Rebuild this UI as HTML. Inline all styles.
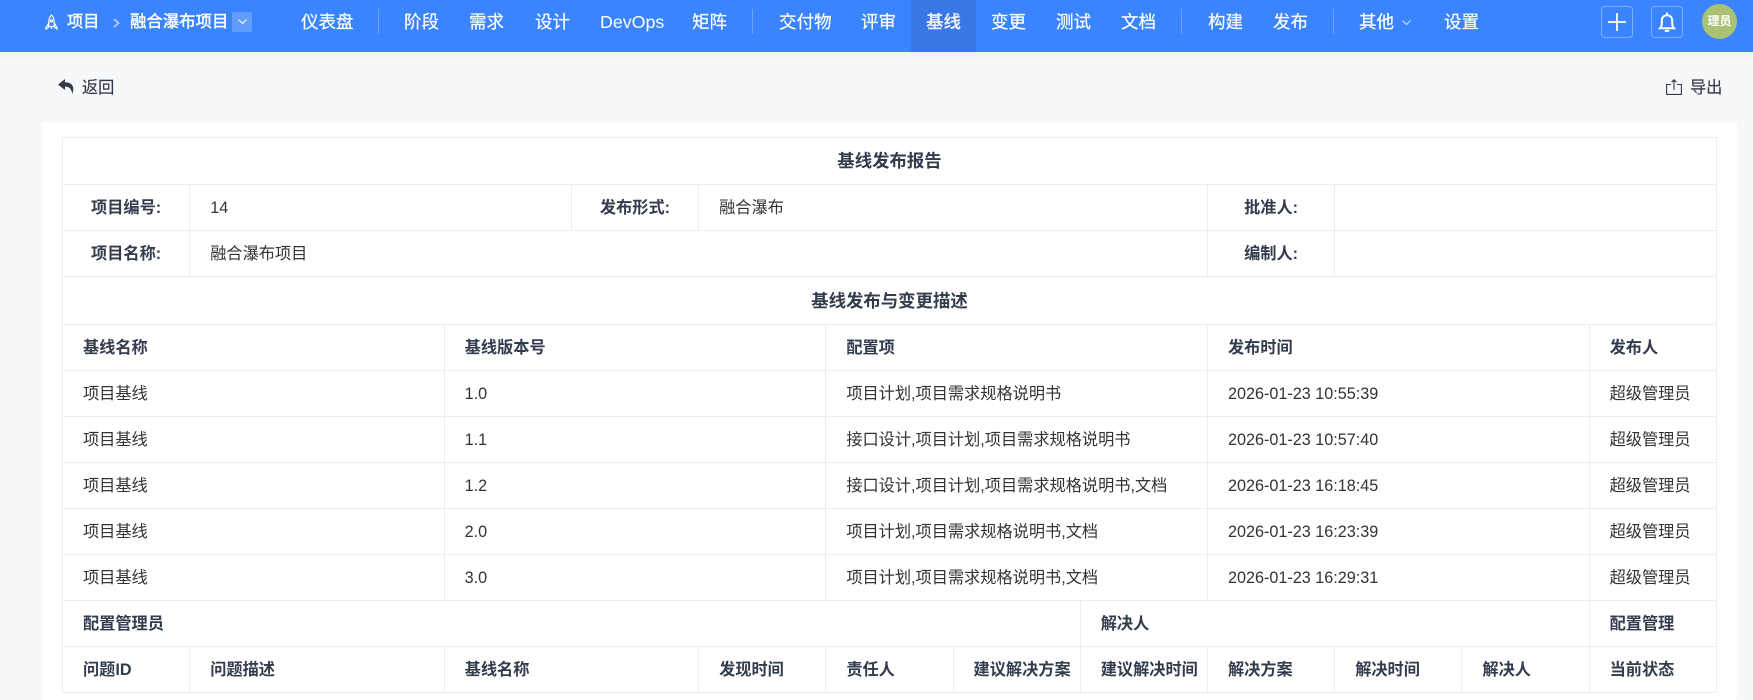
<!DOCTYPE html>
<html lang="zh-CN">
<head>
<meta charset="utf-8">
<title>基线发布报告</title>
<style>
*{box-sizing:border-box}
html,body{margin:0;padding:0;width:1753px;height:700px;overflow:hidden;background:#f7f8fa}
body{font-family:"Liberation Sans","WenQuanYi Zen Hei","Noto Sans CJK SC",sans-serif;font-size:16px;color:#333;position:relative}
#nav{position:absolute;left:0;top:0;width:1753px;height:52px;background:#3a84ff;box-shadow:0 2px 8px rgba(0,0,0,.05);color:#fff}
.t{position:absolute;top:10px;line-height:24px;font-size:17.5px;white-space:nowrap;color:#fff;-webkit-text-stroke:.2px #fff}
.d{position:absolute;top:9px;width:1px;height:25px;background:rgba(255,255,255,.25)}
#act{position:absolute;left:911px;top:0;width:65px;height:52px;background:#3877e6}
.box{position:absolute;top:6px;width:32px;height:32px;border:1px solid rgba(255,255,255,.35);border-radius:4px}
#ava{position:absolute;left:1702px;top:4px;width:35px;height:35px;border-radius:50%;background:#a9c274;color:#fff;font-size:12px;font-weight:bold;line-height:35px;text-align:center}
svg{position:absolute;display:block;overflow:visible}
.s{position:absolute;top:76px;line-height:24px;color:#333c4d;font-size:16.2px;white-space:nowrap;-webkit-text-stroke:.15px #333c4d}
#card{position:absolute;left:42px;top:122px;width:1695px;height:578px;background:#fff;border-radius:3px}
table{position:absolute;left:62px;top:137px;width:1654px;border-collapse:collapse;table-layout:fixed;background:#fff}
td{border:1px solid #ebedf2;padding:0 20px;height:46px;font-size:16.2px;line-height:20px;color:#333;white-space:nowrap;overflow:hidden;font-weight:normal}
.b{font-weight:bold;color:#333c4d}
.c{text-align:center}
.h{font-size:17.4px}
.nw{padding-right:0}
</style>
</head>
<body>
<div id="nav">
  <div id="act"></div>
  <svg style="left:45px;top:14px" width="13" height="16" viewBox="0 0 13 16" fill="none" stroke="#fff" stroke-width="1.2"><path d="M6.5 1C4.6 3 3.8 5.2 3.8 7.6V12.5H9.2V7.6C9.2 5.2 8.4 3 6.5 1Z"/><circle cx="6.5" cy="6.8" r="1.1"/><path d="M3.8 9L1 13.5V15L3.8 13M9.2 9L12 13.5V15L9.2 13M6.5 12.5V15"/></svg>
  <span class="t" style="left:67px;font-size:16.2px;-webkit-text-stroke:.4px #fff">项目</span>
  <svg style="left:113px;top:18px" width="7" height="10" viewBox="0 0 7 10" fill="none" stroke="#a8c8ff" stroke-width="2"><path d="M1 1L5.5 5L1 9"/></svg>
  <span class="t" style="left:130px;font-size:16.4px;-webkit-text-stroke:.4px #fff">融合瀑布项目</span>
  <div style="position:absolute;left:232px;top:12px;width:20px;height:20px;background:rgba(255,255,255,.2);border-radius:2px"></div>
  <svg style="left:238px;top:19px" width="9" height="6" viewBox="0 0 9 6" fill="none" stroke="#fff" stroke-width="1"><path d="M.5 .5L4.5 4.5L8.5 .5"/></svg>

  <span class="t" style="left:301px">仪表盘</span>
  <i class="d" style="left:378px"></i>
  <span class="t" style="left:404px">阶段</span>
  <span class="t" style="left:469px">需求</span>
  <span class="t" style="left:535px">设计</span>
  <span class="t" style="left:600px;-webkit-text-stroke:0;font-size:17.8px">DevOps</span>
  <span class="t" style="left:692px">矩阵</span>
  <i class="d" style="left:752px"></i>
  <span class="t" style="left:779px">交付物</span>
  <span class="t" style="left:861px">评审</span>
  <span class="t" style="left:926px;font-weight:bold;color:#e8edf5;-webkit-text-stroke:0">基线</span>
  <span class="t" style="left:991px">变更</span>
  <span class="t" style="left:1056px">测试</span>
  <span class="t" style="left:1121px">文档</span>
  <i class="d" style="left:1181px"></i>
  <span class="t" style="left:1208px">构建</span>
  <span class="t" style="left:1273px">发布</span>
  <i class="d" style="left:1333px"></i>
  <span class="t" style="left:1359px">其他</span>
  <svg style="left:1402px;top:20px" width="9" height="6" viewBox="0 0 9 6" fill="none" stroke="#d8e6ff" stroke-width="1"><path d="M.5 .5L4.5 4.5L8.5 .5"/></svg>
  <span class="t" style="left:1444px">设置</span>

  <div class="box" style="left:1601px"></div>
  <svg style="left:1608px;top:13px" width="18" height="18" viewBox="0 0 18 18" fill="none" stroke="#fff" stroke-width="1.8"><path d="M0 9H18M9 0V18"/></svg>
  <div class="box" style="left:1651px"></div>
  <svg style="left:1659px;top:12px" width="16" height="20" viewBox="0 0 16 20" fill="none" stroke="#fff" stroke-width="2"><path d="M1 16.2H15C13.6 14.8 13.2 13.4 13.2 11.5V8.4C13.2 5.4 11 3.2 8 3.2S2.8 5.4 2.8 8.4V11.5C2.8 13.4 2.4 14.8 1 16.2Z"/><path d="M8 .5V3M5.8 18.9H10.2"/></svg>
  <div id="ava">理员</div>
</div>

<svg style="left:58px;top:79px" width="17" height="15" viewBox="0 0 17 15"><path d="M7 0L0 5.6L7 11V7.6C10.8 7.4 13.4 9.6 14.4 15C16.4 9 15.6 3.4 7 3.2Z" fill="#333c4d"/></svg>
<span class="s" style="left:82px">返回</span>
<svg style="left:1666px;top:79px" width="16" height="16" viewBox="0 0 16 16" fill="none" stroke="#333c4d" stroke-width="1.1"><path d="M5 5.5H.6V15.4H15.4V5.5H11"/><path d="M8 11V.8M5.6 3.2L8 .8L10.4 3.2"/></svg>
<span class="s" style="left:1690px">导出</span>

<div id="card"></div>
<table>
  <colgroup>
    <col span="13" style="width:127.23px">
  </colgroup>
  <tr><td colspan="13" class="b c h" style="height:47px">基线发布报告</td></tr>
  <tr><td class="b c">项目编号:</td><td colspan="3">14</td><td class="b c">发布形式:</td><td colspan="4">融合瀑布</td><td class="b c">批准人:</td><td colspan="3"></td></tr>
  <tr><td class="b c">项目名称:</td><td colspan="8">融合瀑布项目</td><td class="b c">编制人:</td><td colspan="3"></td></tr>
  <tr><td colspan="13" class="b c h" style="height:48px">基线发布与变更描述</td></tr>
  <tr><td colspan="3" class="b">基线名称</td><td colspan="3" class="b">基线版本号</td><td colspan="3" class="b">配置项</td><td colspan="3" class="b">发布时间</td><td class="b">发布人</td></tr>
  <tr><td colspan="3">项目基线</td><td colspan="3">1.0</td><td colspan="3">项目计划,项目需求规格说明书</td><td colspan="3">2026-01-23 10:55:39</td><td class="nw">超级管理员</td></tr>
  <tr><td colspan="3">项目基线</td><td colspan="3">1.1</td><td colspan="3">接口设计,项目计划,项目需求规格说明书</td><td colspan="3">2026-01-23 10:57:40</td><td class="nw">超级管理员</td></tr>
  <tr><td colspan="3">项目基线</td><td colspan="3">1.2</td><td colspan="3">接口设计,项目计划,项目需求规格说明书,文档</td><td colspan="3">2026-01-23 16:18:45</td><td class="nw">超级管理员</td></tr>
  <tr><td colspan="3">项目基线</td><td colspan="3">2.0</td><td colspan="3">项目计划,项目需求规格说明书,文档</td><td colspan="3">2026-01-23 16:23:39</td><td class="nw">超级管理员</td></tr>
  <tr><td colspan="3">项目基线</td><td colspan="3">3.0</td><td colspan="3">项目计划,项目需求规格说明书,文档</td><td colspan="3">2026-01-23 16:29:31</td><td class="nw">超级管理员</td></tr>
  <tr><td colspan="8" class="b">配置管理员</td><td colspan="4" class="b">解决人</td><td class="b nw">配置管理</td></tr>
  <tr><td class="b nw">问题ID</td><td colspan="2" class="b">问题描述</td><td colspan="2" class="b">基线名称</td><td class="b nw">发现时间</td><td class="b nw">责任人</td><td class="b nw">建议解决方案</td><td class="b nw">建议解决时间</td><td class="b nw">解决方案</td><td class="b nw">解决时间</td><td class="b nw">解决人</td><td class="b nw">当前状态</td></tr>
</table>
</body>
</html>
